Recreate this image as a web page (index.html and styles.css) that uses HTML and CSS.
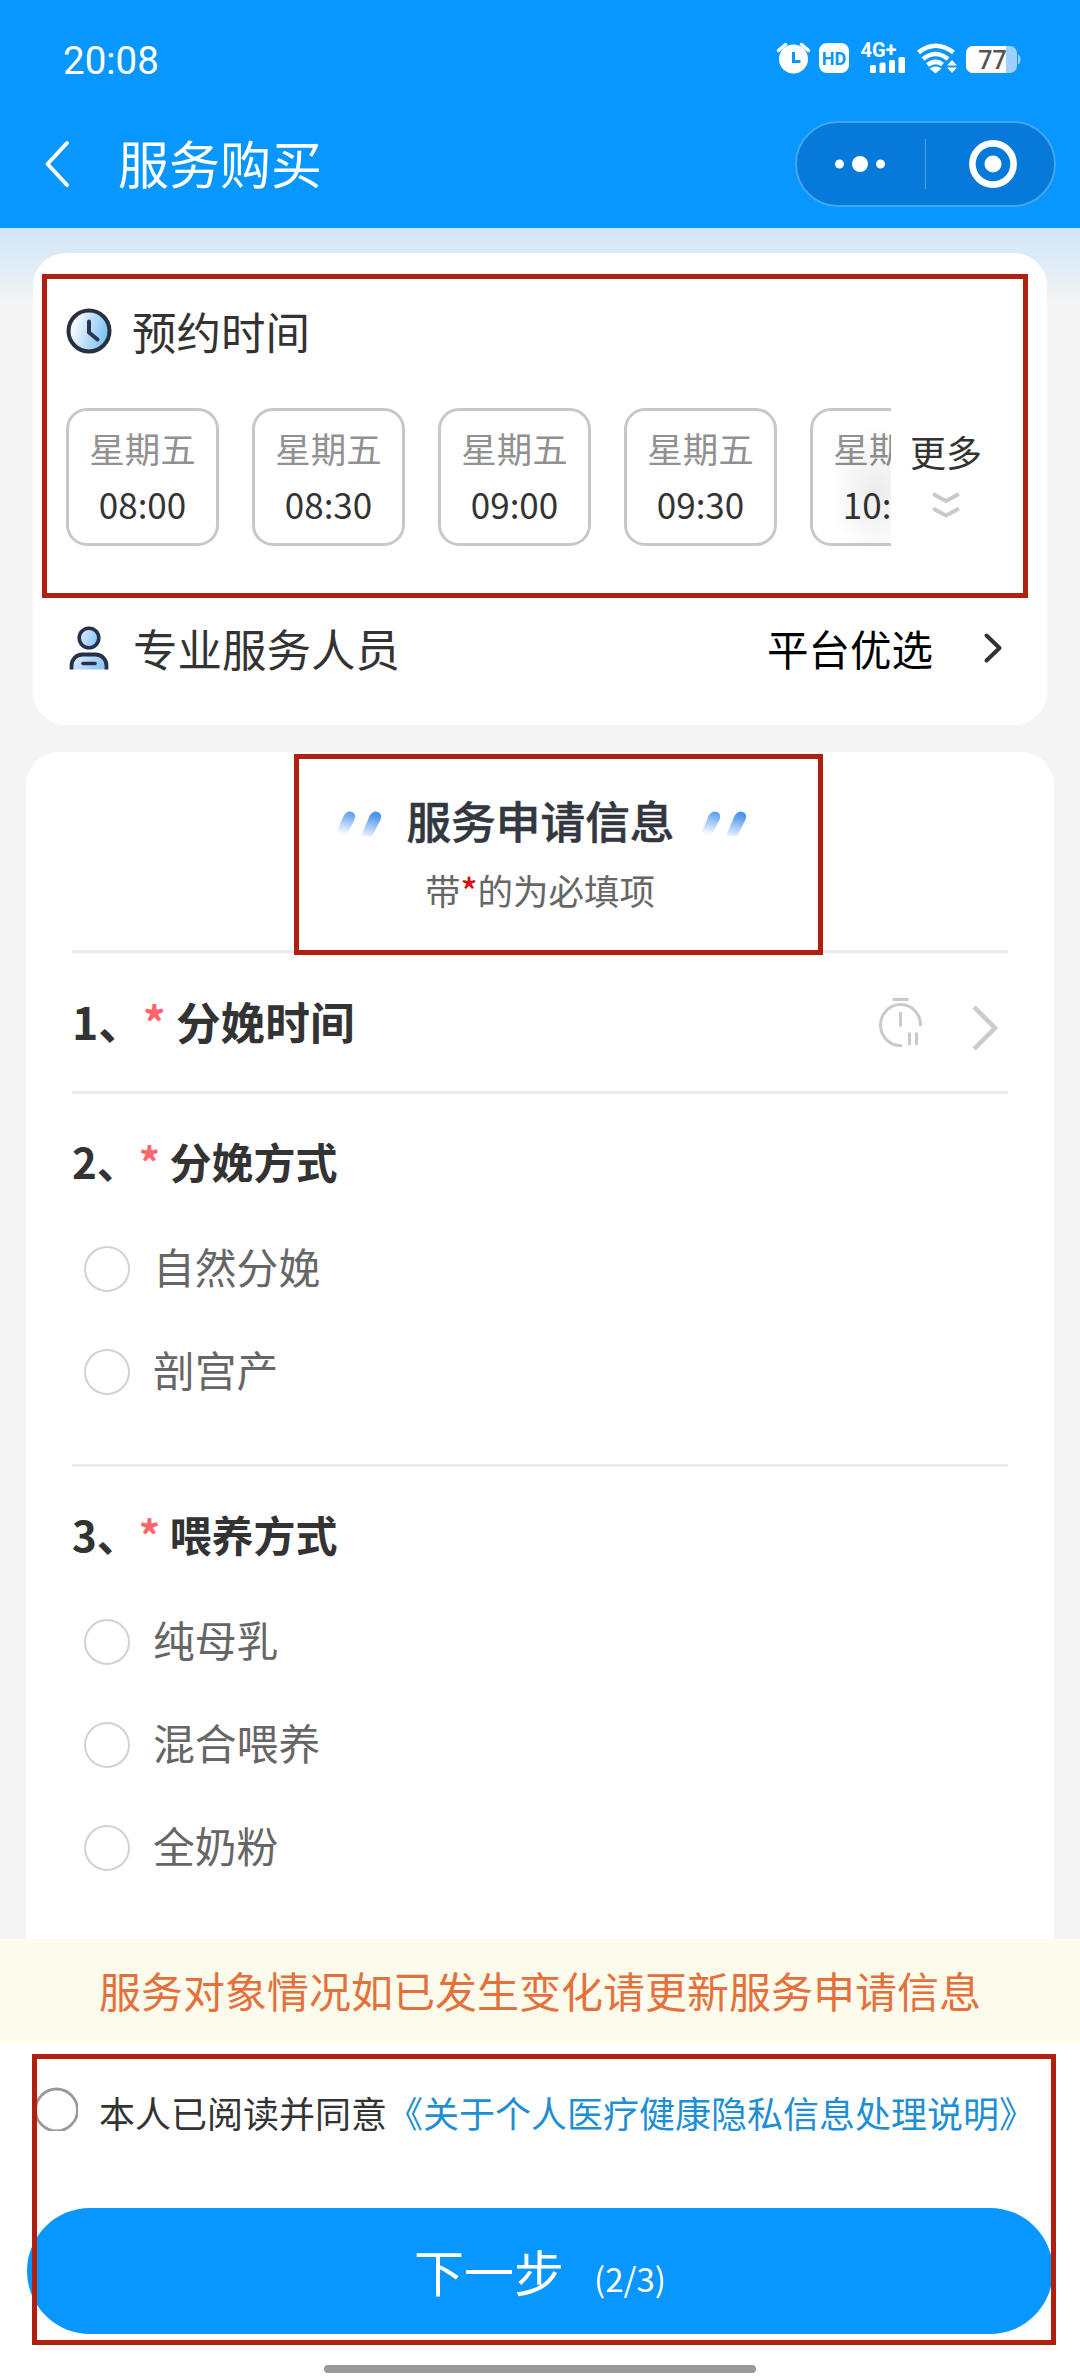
FILE: index.html
```html
<!DOCTYPE html>
<html lang="zh-CN">
<head>
<meta charset="utf-8">
<title>服务购买</title>
<link rel="stylesheet" href="styles.css">
</head>
<body>
<div class="screen">
  <header class="header">
    <div class="status">
      <span class="status-time">20:08</span>
      <svg class="status-icons" width="246" height="34" viewBox="776 41 246 34">
        <g fill="#fff">
          <circle cx="793.500" cy="59" r="14.500"/>
          <path d="M778.500 50.500l7-6M808.500 50.500l-7-6" stroke="#fff" stroke-width="3.500" stroke-linecap="round"/>
          <path d="M793.500 52v9.500h7" fill="none" stroke="#0896ff" stroke-width="3"/>
          <rect x="819" y="43" width="30" height="30" rx="8"/>
          <rect x="870" y="65" width="6" height="8" rx="1.500"/>
          <rect x="879.500" y="62.500" width="6" height="10.500" rx="1.500"/>
          <rect x="889" y="60" width="6" height="13" rx="1.500"/>
          <rect x="898.500" y="57" width="6.500" height="16" rx="1.500"/>
          <path d="M929.500 68.500q6.500-4 12 0l-6 5z"/>
          <path d="M947 65.500l5-5.500 5 5.500zM947 67.500l5 5.500 5-5.500z"/>
        </g>
        <g fill="none" stroke="#fff" stroke-width="4.600">
          <path d="M918.500 52.500q17-13.500 35 0"/>
          <path d="M923 59q12.500-10 25 0"/>
          <path d="M927.500 65q8-6 15-.5"/>
        </g>
        <rect x="966" y="46" width="51" height="27" rx="7" fill="#9bd0ff"/>
        <path d="M973 46h33v27h-33a7 7 0 0 1-7-7V53a7 7 0 0 1 7-7z" fill="#fff"/>
        <path d="M1018 54.500q2.500 1 2.500 5t-2.500 5z" fill="#9bd0ff"/>
        <text x="834" y="64.500" class="icon-hd" text-anchor="middle">HD</text>
        <text x="860.500" y="57" class="icon-net">4G+</text>
        <text x="992.500" y="69" class="icon-bat" text-anchor="middle">77</text>
      </svg>
    </div>
    <div class="navbar">
      <svg class="nav-back" width="28" height="50" viewBox="0 0 28 50"><path d="M24 4L4.500 25 24 46" fill="none" stroke="#fff" stroke-width="4" stroke-linecap="round" stroke-linejoin="round"/></svg>
      <h1 class="nav-title">服务购买</h1>
      <div class="capsule">
        <svg class="capsule-dots" width="50" height="18" viewBox="0 0 50 18"><g fill="#fff"><circle cx="4.500" cy="9" r="4.500"/><circle cx="25" cy="9" r="8"/><circle cx="45.500" cy="9" r="4.500"/></g></svg>
        <span class="capsule-line"></span>
        <svg class="capsule-ring" width="48" height="48" viewBox="0 0 48 48"><circle cx="24" cy="24" r="20.600" fill="none" stroke="#fff" stroke-width="6.600"/><circle cx="24" cy="24" r="8.500" fill="#fff"/></svg>
      </div>
    </div>
  </header>

  <main class="main">
    <section class="card booking">
      <div class="row booking-head">
        <svg class="clock" width="46" height="46" viewBox="0 0 46 46">
          <defs><linearGradient id="clockFill" x1="0" y1="0.300" x2="1" y2="0.600"><stop offset="0.150" stop-color="#f4f8ff"/><stop offset="1" stop-color="#74bdf5"/></linearGradient></defs>
          <circle cx="23" cy="23" r="20.500" fill="url(#clockFill)" stroke="#2a2f3e" stroke-width="4"/>
          <path d="M23 13.500v11l8.500 7" fill="none" stroke="#2a3550" stroke-width="4" stroke-linecap="round" stroke-linejoin="round"/>
        </svg>
        <span class="label">预约时间</span>
      </div>
      <div class="slots-row">
        <div class="slots">
          <div class="slot"><span class="slot-day">星期五</span><span class="slot-time">08:00</span></div>
          <div class="slot"><span class="slot-day">星期五</span><span class="slot-time">08:30</span></div>
          <div class="slot"><span class="slot-day">星期五</span><span class="slot-time">09:00</span></div>
          <div class="slot"><span class="slot-day">星期五</span><span class="slot-time">09:30</span></div>
          <div class="slot"><span class="slot-day">星期五</span><span class="slot-time">10:00</span></div>
        </div>
        <div class="more">
          <span>更多</span>
          <svg width="30" height="28" viewBox="0 0 30 28"><path d="M2 3l13 7 13-7M2 17.500l13 7 13-7" fill="none" stroke="#c9c9c9" stroke-width="4"/></svg>
        </div>
      </div>
      <div class="row staff">
        <svg class="person" width="40" height="44" viewBox="0 0 40 44">
          <defs><linearGradient id="bodyFill" x1="0" y1="0" x2="1" y2="0.400"><stop offset="0" stop-color="#e6f0ff"/><stop offset="1" stop-color="#8fc6fa"/></linearGradient></defs>
          <circle cx="20" cy="12" r="9.800" fill="url(#bodyFill)" stroke="#28304a" stroke-width="3.600"/>
          <path d="M2.500 43.500V40c0-7 5-11.500 11-11.500h13c6 0 11 4.500 11 11.500v3.500z" fill="url(#bodyFill)"/>
          <path d="M2.500 43.500V40c0-7 5-11.500 11-11.500h13c6 0 11 4.500 11 11.500v3.500" fill="none" stroke="#28304a" stroke-width="3.800"/>
          <path d="M14 37.500h12" stroke="#28304a" stroke-width="3.600" stroke-linecap="round"/>
        </svg>
        <span class="label">专业服务人员</span>
        <span class="staff-value">平台优选</span>
        <svg class="staff-arrow" width="20" height="32" viewBox="0 0 20 32"><path d="M3.500 3.500L16.500 16 3.500 28.500" fill="none" stroke="#333" stroke-width="4" stroke-linecap="round" stroke-linejoin="round"/></svg>
      </div>
    </section>

    <section class="card form">
      <div class="form-title">
        <svg class="ticks" width="46" height="28" viewBox="0 0 46 28">
          <defs><linearGradient id="tick" x1="0.700" y1="0" x2="0.300" y2="1"><stop offset="0.080" stop-color="#4f96ea"/><stop offset="0.550" stop-color="#a9ccf7"/><stop offset="1" stop-color="#ffffff"/></linearGradient></defs>
          <path id="ticks" d="M0 26L8.500 6Q12 0 17 2T19 11L11 26zM26 26L34.500 6Q38 0 43 2T45 11L37 26z" fill="url(#tick)"/>
        </svg>
        <h2>服务申请信息</h2>
        <svg class="ticks" width="46" height="28" viewBox="0 0 46 28"><use href="#ticks"/></svg>
      </div>
      <p class="form-sub">带<b class="must">*</b>的为必填项</p>

      <div class="question question-line">
        <h3>1、<b class="star">*</b> 分娩时间</h3>
        <svg class="timer" width="44" height="50" viewBox="0 0 44 50"><g fill="none" stroke="#cacaca" stroke-width="3"><path d="M14.500 2.500h16M22.500 15v14.500M31.500 35.500v12.500M38.500 35.500v12.500"/><path d="M42.500 29A20 20.500 0 1 0 24 48.500"/></g></svg>
        <svg class="next" width="28" height="48" viewBox="0 0 28 48"><path d="M3 3l21 21L3 45" fill="none" stroke="#cbcbcb" stroke-width="4.500"/></svg>
      </div>

      <div class="question">
        <h3>2、<b class="star">*</b> 分娩方式</h3>
        <div class="option"><i class="radio"></i><span>自然分娩</span></div>
        <div class="option"><i class="radio"></i><span>剖宫产</span></div>
      </div>

      <div class="question">
        <h3>3、<b class="star">*</b> 喂养方式</h3>
        <div class="option"><i class="radio"></i><span>纯母乳</span></div>
        <div class="option"><i class="radio"></i><span>混合喂养</span></div>
        <div class="option"><i class="radio"></i><span>全奶粉</span></div>
      </div>
    </section>
  </main>

  <footer class="footer">
    <p class="notice">服务对象情况如已发生变化请更新服务申请信息</p>
    <div class="agree">
      <svg width="45" height="44" viewBox="0 0 45 44"><circle cx="23.500" cy="23" r="21" fill="none" stroke="#999" stroke-width="2.800"/></svg>
      <span>本人已阅读并同意<a class="link">《关于个人医疗健康隐私信息处理说明》</a></span>
    </div>
    <div class="submit">下一步<small>(2/3)</small></div>
    <div class="home-bar"></div>
  </footer>

  <div class="mark mark-time"></div>
  <div class="mark mark-title"></div>
  <div class="mark mark-submit"></div>
</div>
</body>
</html>
```
FILE: styles.css
```css
* { box-sizing: border-box; }

body {
  margin: 0;
  font-family: "Noto Sans CJK SC", sans-serif;
  color: #333;
}

h1, h2, h3, p { margin: 0; font-weight: 400; }
svg { display: block; flex: none; }

.screen {
  position: relative;
  width: 1080px;
  height: 2376px;
  overflow: hidden;
  background: #f5f5f5;
  display: flex;
  flex-direction: column;
  white-space: nowrap;
}

/* header */
.header { height: 228px; background: #0896ff; color: #fff; }

.status {
  display: flex;
  justify-content: space-between;
  padding: 41px 58px 0 63px;
  height: 121px;
}
.status-time { font: 400 38.500px/40px Roboto, sans-serif; }
.icon-hd { font: 700 18px Roboto, sans-serif; fill: #0896ff; }
.icon-net { font: 700 20px Roboto, sans-serif; fill: #fff; }
.icon-bat { font: 500 25px Roboto, sans-serif; fill: #555; }

.navbar { display: flex; height: 86px; padding: 0 24px 0 43px; }
.nav-back { margin-top: 18px; }
.nav-title { margin-left: 47px; font-size: 51px; line-height: 82px; }
.capsule {
  margin-left: auto;
  width: 261px;
  height: 86px;
  border: 2px solid #41a6f5;
  border-radius: 43px;
  background: #0779d8;
  display: flex;
  align-items: center;
  padding-left: 38px;
}
.capsule-line { width: 1px; height: 50px; margin-left: 40px; background: #49a0e6; }
.capsule-ring { margin-left: 43px; }

/* cards */
.main {
  height: 1711px;
  flex: none;
  overflow: hidden;
  padding-top: 25px;
  background: linear-gradient(#d0e5f8, #e0ecf7 35px, #f5f5f5 78px);
}
.card { background: #fff; }
.booking { margin: 0 33px; height: 472px; padding: 47px 33px 0; border-radius: 33px; }
.row { display: flex; align-items: center; }
.label { font-size: 44.5px; }
.booking-head { height: 61px; }
.booking-head .label { margin-left: 20px; }

.slots-row { display: flex; height: 138px; margin-top: 47px; }
.slots { position: relative; display: flex; gap: 33px; width: 825px; overflow: hidden; }
.slots::after {
  content: "";
  position: absolute;
  inset: 0 0 0 auto;
  width: 56px;
  background: radial-gradient(ellipse 50px 68px at 42px 84px, rgba(0,0,0,.075), rgba(0,0,0,0));
}
.slot {
  flex: none;
  width: 153px;
  height: 138px;
  padding-top: 9px;
  border: 3px solid #c8c8c8;
  border-radius: 21px;
  display: flex;
  flex-direction: column;
  align-items: center;
}
.slot span { line-height: 56px; }
.slot-day { font-size: 35.5px; color: #919191; }
.slot-time { font-size: 35px; }
.more { width: 74px; margin-left: 18px; display: flex; flex-direction: column; align-items: center; }
.more span { font-size: 36px; line-height: 50px; margin: 18px 0 15px; }

.staff { height: 65px; margin-top: 69px; padding-left: 3px; }
.staff .label { margin-left: 24px; }
.staff-value { margin-left: auto; font-size: 41.500px; color: #000; }
.staff-arrow { margin: 0 11px 0 50px; }

.form { margin: 27px 26px 0; height: 1260px; padding: 38px 46px 0; border-radius: 33px; }
.form-title { display: flex; justify-content: center; align-items: center; height: 59px; gap: 25px; padding-left: 1px; }
.form-title h2 { font-size: 44.700px; font-weight: 500; color: #333740; -webkit-text-stroke: .5px #333740; }
.ticks { margin-top: 8px; }
.form-sub { margin-top: 18px; height: 46px; font-size: 35.500px; line-height: 46px; text-align: center; color: #666; margin-bottom: 37px; }
.must { font-weight: 500; color: #d40f0f; }

.question { border-top: 3px solid #ebebeb; padding: 37px 0 41px; }
.question h3 { height: 60px; margin-bottom: 26px; font-size: 42px; line-height: 60px; font-weight: 700; }
.star { font-weight: 700; color: #ff666c; }
.question-line { display: flex; align-items: center; height: 141px; padding: 0; }
.question-line h3 { margin: 0 auto 2px 0; font-size: 44.700px; }
.timer { margin-right: 49px; }
.next { margin: 12px 9px 0 0; }

.option { display: flex; align-items: center; height: 103px; padding-left: 12px; font-size: 41.800px; color: #666; }
.option span { margin-left: 23px; padding-bottom: 5px; }
.radio { width: 46px; height: 46px; border: 2px solid #d2d2d2; border-radius: 50%; }

/* footer */
.footer { flex: 1; background: #fff; }
.notice { height: 104px; line-height: 101px; background: #fdfbec; font-size: 42px; text-align: center; color: #e4713c; }
.agree { display: flex; align-items: flex-start; padding: 44px 0 0 33px; height: 165px; font-size: 36px; }
.agree span { line-height: 51px; margin-left: 21px; }
.link { color: #1e8fd5; }
.submit {
  display: flex;
  align-items: baseline;
  justify-content: center;
  width: 1026px;
  height: 126px;
  margin-left: 27px;
  border-radius: 63px;
  background: #0896ff;
  color: #fff;
  font-size: 50px;
  line-height: 124px;
}
.submit small { font-size: 33px; margin-left: 30px; }
.home-bar { width: 432px; height: 8px; margin: 31px auto 0; border-radius: 4px; background: #999; }

/* highlight frames drawn over the page */
.mark { position: absolute; border: 5px solid #b01f10; }
.mark-time { left: 42px; top: 274px; width: 986px; height: 324px; }
.mark-title { left: 294px; top: 754px; width: 529px; height: 201px; }
.mark-submit { left: 32px; top: 2054px; width: 1024px; height: 291px; }
```
